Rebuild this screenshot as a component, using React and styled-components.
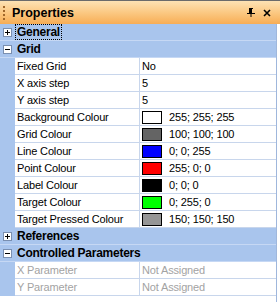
import React from "react";
import styled, { createGlobalStyle } from "styled-components";

const GlobalStyle = createGlobalStyle`
  html, body {
    margin: 0;
    padding: 0;
    background: #ffffff;
  }
  body {
    font-family: Tahoma, "Liberation Sans", Arial, sans-serif;
    font-size: 11px;
    letter-spacing: -0.15px;
    color: #000;
  }
`;

const Panel = styled.div`
  width: 280px;
  height: 302px;
  display: flex;
  flex-direction: column;
  overflow: hidden;
  background: #fff;
`;

const TitleBar = styled.div`
  height: 23px;
  border-top: 1px solid #6b6b6b;
  background: linear-gradient(to bottom, #fde2b4 0%, #fbc67e 55%, #f7ad55 100%);
  display: flex;
  align-items: center;
  padding: 0 9px 0 3px;
  gap: 7px;
`;

const Gripper = styled.div`
  width: 2px;
  height: 14px;
  display: flex;
  flex-direction: column;
  justify-content: space-between;

  span {
    display: block;
    width: 2px;
    height: 2px;
    background: #a0672a;
  }
`;

const Title = styled.div`
  flex: 1;
  font-weight: bold;
  font-size: 12.5px;
  letter-spacing: 0;
  color: #000;
`;

const TitleButtons = styled.div`
  display: flex;
  align-items: center;
  gap: 8px;
  svg {
    display: block;
  }
`;

const Grid = styled.div`
  flex: 1;
  display: flex;
  flex-direction: column;
  margin-right: 3px;
  border-right: 1px solid #9fb7dc;
  background: #fff;
`;

const CategoryRow = styled.div`
  height: 16px;
  border-bottom: 1px solid #c6d8f4;
  background: #a9c5ed;
  display: flex;
  align-items: center;
  font-weight: bold;
  font-size: 12px;
  letter-spacing: -0.25px;
`;

const Toggle = styled.div`
  width: 7px;
  height: 7px;
  margin: 0 4px 0 3px;
  border: 1px solid #7a8fb0;
  background: #fff;
  position: relative;
  flex-shrink: 0;

  &::before {
    content: "";
    position: absolute;
    left: 1px;
    top: 3px;
    width: 5px;
    height: 1px;
    background: #000;
  }
  &::after {
    content: "";
    display: ${(p) => (p.open ? "none" : "block")};
    position: absolute;
    left: 3px;
    top: 1px;
    width: 1px;
    height: 5px;
    background: #000;
  }
`;

const CategoryLabel = styled.span`
  outline: ${(p) => (p.focused ? "1px dotted #000" : "none")};
  outline-offset: 0;
  padding: 0 1px;
  line-height: 14px;
`;

const PropRow = styled.div`
  height: 17px;
  display: grid;
  grid-template-columns: 15px 125px 1fr;
`;

const Gutter = styled.div`
  background: #a9c5ed;
`;

const Cell = styled.div`
  border-bottom: 1px solid #c8d6ec;
  border-right: ${(p) => (p.name ? "1px solid #c8d6ec" : "none")};
  display: flex;
  align-items: center;
  padding-left: 2px;
  color: ${(p) => (p.disabled ? "#a3a3a3" : "#000")};
  white-space: nowrap;
  overflow: hidden;
`;

const Swatch = styled.span`
  width: 18px;
  height: 11px;
  border: 1px solid #000;
  background: ${(p) => p.color};
  margin-right: 7px;
  flex-shrink: 0;
`;

const PinIcon = () => (
  <svg width="8" height="9" viewBox="0 0 8 9">
    <path d="M2 0h4v1H5v4h3v1H4.5v3h-1V6H0V5h2V1H2z" fill="#000" />
    <rect x="2" y="1" width="1" height="4" fill="#000" />
  </svg>
);

const CloseIcon = () => (
  <svg width="8" height="8" viewBox="0 0 8 8">
    <path d="M1 1l6 6M7 1l-6 6" stroke="#000" strokeWidth="1.6" />
  </svg>
);

const gridProps = [
  { name: "Fixed Grid", value: "No" },
  { name: "X axis step", value: "5" },
  { name: "Y axis step", value: "5" },
  { name: "Background Colour", value: "255; 255; 255", color: "#ffffff" },
  { name: "Grid Colour", value: "100; 100; 100", color: "#646464" },
  { name: "Line Colour", value: "0; 0; 255", color: "#0000ff" },
  { name: "Point Colour", value: "255; 0; 0", color: "#ff0000" },
  { name: "Label Colour", value: "0; 0; 0", color: "#000000" },
  { name: "Target Colour", value: "0; 255; 0", color: "#00ff00" },
  { name: "Target Pressed Colour", value: "150; 150; 150", color: "#969696" },
];

const paramProps = [
  { name: "X Parameter", value: "Not Assigned", disabled: true },
  { name: "Y Parameter", value: "Not Assigned", disabled: true },
];

const Category = ({ label, open, focused }) => (
  <CategoryRow>
    <Toggle open={open} />
    <CategoryLabel focused={focused}>{label}</CategoryLabel>
  </CategoryRow>
);

const Property = ({ name, value, color, disabled }) => (
  <PropRow>
    <Gutter />
    <Cell name="true" disabled={disabled}>
      {name}
    </Cell>
    <Cell disabled={disabled}>
      {color && <Swatch color={color} />}
      {value}
    </Cell>
  </PropRow>
);

export default function App() {
  return (
    <>
      <GlobalStyle />
      <Panel>
        <TitleBar>
          <Gripper>
            <span />
            <span />
            <span />
            <span />
          </Gripper>
          <Title>Properties</Title>
          <TitleButtons>
            <PinIcon />
            <CloseIcon />
          </TitleButtons>
        </TitleBar>
        <Grid>
          <Category label="General" focused />
          <Category label="Grid" open />
          {gridProps.map((p) => (
            <Property key={p.name} {...p} />
          ))}
          <Category label="References" />
          <Category label="Controlled Parameters" open />
          {paramProps.map((p) => (
            <Property key={p.name} {...p} />
          ))}
        </Grid>
      </Panel>
    </>
  );
}
